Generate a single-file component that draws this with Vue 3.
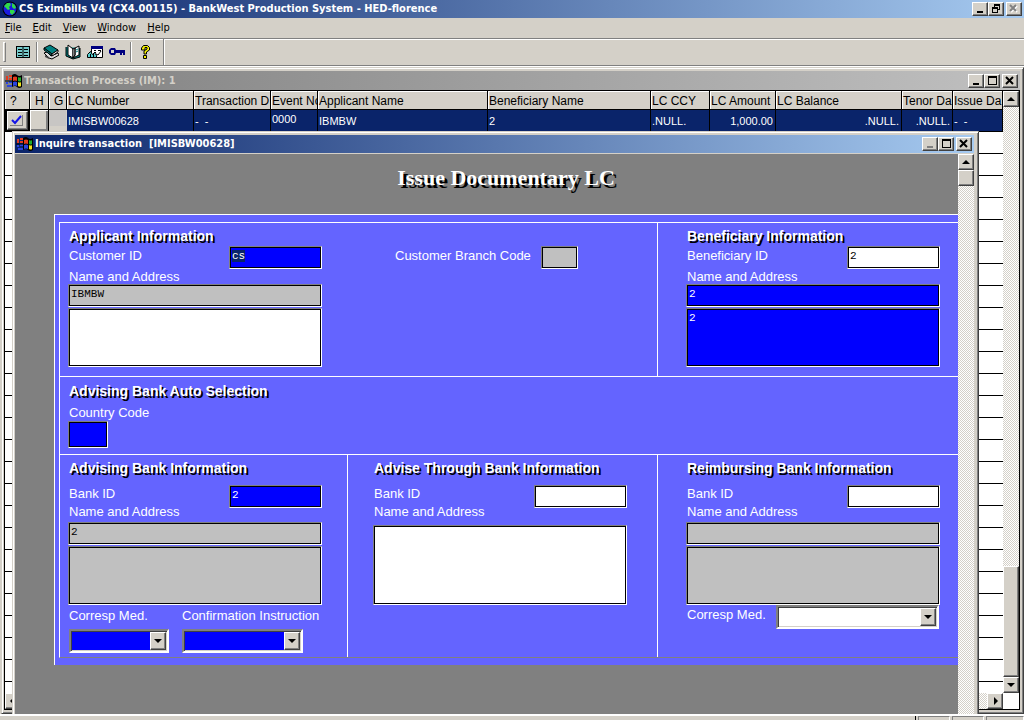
<script setup>
import { onMounted, ref } from 'vue'

const menus = ['File', 'Edit', 'View', 'Window', 'Help']

const columns = [
  { name: '?', width: 25, value: '', kind: 'tick' },
  { name: 'H', width: 19, value: '', kind: 'raised' },
  { name: 'G', width: 18, value: '', kind: 'flat' },
  { name: 'LC Number', width: 127, value: 'IMISBW00628' },
  { name: 'Transaction D', width: 77, value: '-  -' },
  { name: 'Event No', width: 47, value: '0000', kind: 'high' },
  { name: 'Applicant Name', width: 170, value: 'IBMBW' },
  { name: 'Beneficiary Name', width: 163, value: '2' },
  { name: 'LC CCY', width: 59, value: '.NULL.' },
  { name: 'LC Amount', width: 66, value: '1,000.00', kind: 'right' },
  { name: 'LC Balance', width: 126, value: '.NULL.', kind: 'right' },
  { name: 'Tenor Da', width: 51, value: '.NULL.', kind: 'right' },
  { name: 'Issue Da', width: 50, value: '-  -' },
]

const customerId = ref('cs')
const customerInput = ref(null)
const selected = ref(true)

onMounted(() => {
  customerInput.value.focus()
  customerInput.value.select()
})
</script>

<template>
  <div class="app">
    <header class="titlebar main-title">
      <svg class="globe" viewBox="0 0 16 16" aria-hidden="true">
        <circle cx="8" cy="8" r="7.5" fill="#000" />
        <circle cx="8" cy="8" r="6.5" fill="#1a1ae0" />
        <path d="M2 5l3-3 3 0 1 2-2 2 1 2-2 1-2-2zM10 2l3 2 1 3-2 1-2-2zM8 9l4 0 1 2-3 3-2-2z" fill="#2fd84a" />
      </svg>
      <h1>CS Eximbills V4 (CX4.00115) - BankWest Production System - HED-florence</h1>
      <div class="winbuttons">
        <button aria-label="Minimize"><svg viewBox="0 0 12 10"><path d="M3 7h6v2H3z" /></svg></button>
        <button aria-label="Restore"><svg viewBox="0 0 12 10"><path d="M4 0h6v6H8v3H2V3h2zM5 2v1h3v2h1V2zM3 5v3h4V5z" fill-rule="evenodd" /></svg></button>
        <button aria-label="Close" class="close off"><svg viewBox="0 0 12 10"><path d="M3 2l6 6M9 2l-6 6" class="light" /><path d="M2 1l6 6M8 1l-6 6" class="x" /></svg></button>
      </div>
    </header>

    <nav class="menubar">
      <button v-for="m in menus" :key="m"><u>{{ m[0] }}</u>{{ m.slice(1) }}</button>
    </nav>

    <div class="toolrow">
      <div class="toolbar">
        <span class="grip"></span>
        <button aria-label="List">
          <svg viewBox="0 0 16 16"><path d="M1 2h14v12H1z" fill="#000" /><path d="M2 3h12v10H2z" fill="#7cc" /><path d="M3 5.500h4M9 5.500h4M3 8.500h4M9 8.500h4M3 11.500h4M9 11.500h4" stroke="#000" /><path d="M8 3v10" stroke="#000" /></svg>
        </button>
        <span class="sep"></span>
        <button aria-label="Catalogue">
          <svg viewBox="0 0 16 16"><path d="M1 9l3-1 4 4 7-3 1 2-7 4-3-1z" fill="#ddd" stroke="#000" /><path d="M1 4l6-3 8 5-6 4z" fill="#008080" stroke="#000" /><path d="M1 4v2l8 6v-2z" fill="#008080" stroke="#000" /><path d="M9 10v2l6-4V6z" fill="#fff" stroke="#000" /><path d="M2 11v2l4 2v-2z" fill="#444" /></svg>
        </button>
        <button aria-label="Open">
          <svg viewBox="0 0 16 16"><path d="M1 3v9l7 3 7-2V4" fill="#008080" stroke="#000" /><path d="M3 1l5 4v9l-5-3z" fill="#fff" stroke="#000" /><path d="M8 5l2-1v7l-2 3zM10 4l4-2v9l-6 3 2-3z" fill="#fff" stroke="#000" /><path d="M11 6l2-1M11 8l2-1" stroke="#008080" /></svg>
        </button>
        <button aria-label="Report">
          <svg viewBox="0 0 16 16"><path d="M4.500 2.500h11v11h-11z" fill="#fff" stroke="#000" /><path d="M4 2h12v3H4z" fill="#000080" /><path d="M7 6.500h2M11 6.500h3M7 8.500h2" stroke="#000" /><path d="M9 10l2 1 3-4" fill="none" stroke="#000" /><path d="M0.500 13.500v-3l3-3 2 3 2-2 2 3v2z" fill="#5cc" stroke="#000" /><path d="M3.500 10v3M6.500 10v3" stroke="#000" /></svg>
        </button>
        <button aria-label="Key">
          <svg viewBox="0 0 16 16"><path d="M2 4h4l1 2h9v5h-2V9h-1v2h-2V9H7l-1 2H2l-2-2V6z" fill="#000080" /><path d="M2 6h3v3H2z" fill="#d4d0c8" /></svg>
        </button>
        <span class="sep"></span>
        <button aria-label="Help">
          <svg viewBox="0 0 16 16"><path d="M4.500 6V4l2-2.500h4l2 2v2.500l-3 2v2h-2.500v-3l3-2v-1.500h-2V6zM6.500 11.500h3v3h-3z" fill="#f4f000" stroke="#000" /></svg>
        </button>
      </div>
    </div>

    <main class="mdi">
      <section class="window docs">
        <header class="titlebar idle">
          <svg class="flag" viewBox="0 0 18 16" aria-hidden="true">
            <path d="M7 2q3-2 5 0t5 0v12q-3 2-5 0t-5 0z" fill="#000" />
            <path d="M8 4q2-1 4 0v4q-2-1-4 0z" fill="#e33b1e" /><path d="M13 4q2 1 3 0v4q-1 1-3 0z" fill="#1fae2c" />
            <path d="M8 9q2-1 4 0v4q-2-1-4 0z" fill="#2a44e0" /><path d="M13 9q2 1 3 0v4q-1 1-3 0z" fill="#f2e21b" />
            <path d="M1 4h2M4 3h3M1 6h2M4 6h3" stroke="#e33b1e" stroke-width="2" /><path d="M1 10h2M4 9h3M2 13h5" stroke="#2a44e0" stroke-width="2" /><path d="M0 8h7" stroke="#000" />
          </svg>
          <h2>Transaction Process (IM): 1</h2>
          <div class="winbuttons">
            <button aria-label="Minimize"><svg viewBox="0 0 12 10"><path d="M3 7h6v2H3z" /></svg></button>
            <button aria-label="Maximize"><svg viewBox="0 0 12 10"><path d="M2 0h9v9H2zM3 2v6h7V2z" fill-rule="evenodd" /></svg></button>
            <button aria-label="Close" class="close"><svg viewBox="0 0 12 10"><path d="M2 1l7 7M9 1l-7 7" class="x" /></svg></button>
          </div>
        </header>
        <div class="gridbox">
          <div class="gridmain">
            <div class="gridview">
              <table>
                <colgroup>
                  <col v-for="c in columns" :key="c.name" :style="{ width: c.width + 'px' }" />
                </colgroup>
                <thead>
                  <tr><th v-for="c in columns" :key="c.name" scope="col">{{ c.name }}</th></tr>
                </thead>
                <tbody>
                  <tr class="current">
                    <td v-for="c in columns" :key="c.name" :class="c.kind">
                      <label v-if="c.kind === 'tick'" class="tick">
                        <input v-model="selected" type="checkbox" aria-label="Select transaction" />
                        <svg v-if="selected" viewBox="0 0 12 10"><path d="M2 5l3 3 6-7" /></svg>
                      </label>
                      <template v-else>{{ c.value }}</template>
                    </td>
                  </tr>
                  <tr v-for="n in 27" :key="n"><td :colspan="columns.length"></td></tr>
                </tbody>
              </table>
            </div>
            <div class="hscroll">
              <button aria-label="Scroll left"><svg viewBox="0 0 8 8"><path d="M5 0v8L1 4z" /></svg></button>
              <button aria-label="Scroll right"><svg viewBox="0 0 8 8"><path d="M3 0v8l4-4z" /></svg></button>
            </div>
          </div>
          <div class="gridside">
            <div class="vscroll">
              <button aria-label="Scroll up"><svg viewBox="0 0 8 8"><path d="M0 6h8L4 2z" /></svg></button>
              <span class="space"></span>
              <span class="thumb long"></span>
              <button aria-label="Scroll down"><svg viewBox="0 0 8 8"><path d="M0 2h8L4 6z" /></svg></button>
            </div>
            <div class="corner"></div>
          </div>
        </div>
      </section>

      <section class="window inquire">
        <header class="titlebar">
          <svg class="flag" viewBox="0 0 18 16" aria-hidden="true">
            <path d="M7 2q3-2 5 0t5 0v12q-3 2-5 0t-5 0z" fill="#000" />
            <path d="M8 4q2-1 4 0v4q-2-1-4 0z" fill="#e33b1e" /><path d="M13 4q2 1 3 0v4q-1 1-3 0z" fill="#1fae2c" />
            <path d="M8 9q2-1 4 0v4q-2-1-4 0z" fill="#2a44e0" /><path d="M13 9q2 1 3 0v4q-1 1-3 0z" fill="#f2e21b" />
            <path d="M1 4h2M4 3h3M1 6h2M4 6h3" stroke="#e33b1e" stroke-width="2" /><path d="M1 10h2M4 9h3M2 13h5" stroke="#2a44e0" stroke-width="2" /><path d="M0 8h7" stroke="#000" />
          </svg>
          <h2>Inquire transaction&nbsp; [IMISBW00628]</h2>
          <div class="winbuttons">
            <button aria-label="Minimize" class="dim"><svg viewBox="0 0 12 10"><path d="M3 7h6v2H3z" /></svg></button>
            <button aria-label="Maximize"><svg viewBox="0 0 12 10"><path d="M2 0h9v9H2zM3 2v6h7V2z" fill-rule="evenodd" /></svg></button>
            <button aria-label="Close" class="close"><svg viewBox="0 0 12 10"><path d="M2 1l7 7M9 1l-7 7" class="x" /></svg></button>
          </div>
        </header>
        <div class="client">
          <div class="canvas">
            <h3 class="form-title">Issue Documentary LC</h3>
            <form class="panel" @submit.prevent>
              <div class="cells">
                <fieldset class="cell applicant">
                  <legend>Applicant Information</legend>
                  <div class="line">
                    <label for="cust">Customer ID</label>
                    <input id="cust" ref="customerInput" v-model="customerId" class="box blue code" spellcheck="false" />
                    <label for="branch" class="branch">Customer Branch Code</label>
                    <input id="branch" class="box grey short" />
                  </div>
                  <label for="appname">Name and Address</label>
                  <input id="appname" class="box grey wide" value="IBMBW" />
                  <textarea class="box wide area" aria-label="Applicant address"></textarea>
                </fieldset>

                <fieldset class="cell beneficiary third">
                  <legend>Beneficiary Information</legend>
                  <div class="line">
                    <label for="ben">Beneficiary ID</label>
                    <input id="ben" class="box code" value="2" />
                  </div>
                  <label for="benname">Name and Address</label>
                  <input id="benname" class="box blue wide" value="2" />
                  <textarea class="box blue wide area" aria-label="Beneficiary address">2</textarea>
                </fieldset>

                <fieldset class="cell auto">
                  <legend>Advising Bank Auto Selection</legend>
                  <label for="country">Country Code</label>
                  <input id="country" class="box blue country" />
                </fieldset>

                <fieldset class="cell bank">
                  <legend>Advising Bank Information</legend>
                  <div class="pair">
                    <label for="adv">Bank ID</label>
                    <input id="adv" class="box blue code" value="2" />
                    <label for="advname">Name and Address</label>
                  </div>
                  <input id="advname" class="box grey wide" value="2" />
                  <textarea class="box grey wide area" aria-label="Advising bank address"></textarea>
                  <div class="choices">
                    <label for="med">Corresp Med.</label>
                    <label for="conf">Confirmation Instruction</label>
                    <span class="combo blue"><select id="med"><option></option></select><i><svg viewBox="0 0 8 8"><path d="M0 2h8L4 6z" /></svg></i></span>
                    <span class="combo blue"><select id="conf"><option></option></select><i><svg viewBox="0 0 8 8"><path d="M0 2h8L4 6z" /></svg></i></span>
                  </div>
                </fieldset>

                <fieldset class="cell bank second">
                  <legend>Advise Through Bank Information</legend>
                  <div class="pair">
                    <label for="thru">Bank ID</label>
                    <input id="thru" class="box code" />
                    <label for="thruname">Name and Address</label>
                  </div>
                  <textarea id="thruname" class="box wide tall"></textarea>
                </fieldset>

                <fieldset class="cell bank third">
                  <legend>Reimbursing Bank Information</legend>
                  <div class="pair">
                    <label for="reim">Bank ID</label>
                    <input id="reim" class="box code" />
                    <label for="reimname">Name and Address</label>
                  </div>
                  <input id="reimname" class="box grey wide" />
                  <textarea class="box grey wide area" aria-label="Reimbursing bank address"></textarea>
                  <div class="inline-choice">
                    <label for="rmed">Corresp Med.</label>
                    <span class="combo"><select id="rmed"><option></option></select><i><svg viewBox="0 0 8 8"><path d="M0 2h8L4 6z" /></svg></i></span>
                  </div>
                </fieldset>
              </div>
            </form>
          </div>
          <div class="vscroll">
            <button aria-label="Scroll up"><svg viewBox="0 0 8 8"><path d="M0 6h8L4 2z" /></svg></button>
            <span class="thumb"></span>
          </div>
        </div>
      </section>
    </main>

    <footer class="status">
      <span></span><span></span><span></span>
    </footer>
  </div>
</template>

<style>
body {
  background: #d4d0c8;
}
</style>

<style scoped>
* {
  box-sizing: border-box;
}
.app {
  display: flex;
  flex-direction: column;
  height: 100vh;
  overflow: hidden;
  background: #d4d0c8;
  color: #000;
  font: 12px/14px "Liberation Sans", Arial, sans-serif;
}
button {
  margin: 0;
  padding: 0;
  border: 0;
  background: #d4d0c8;
  color: inherit;
  font: inherit;
}
h1, h2, h3 {
  margin: 0;
}

/* Title bars */
.titlebar {
  display: flex;
  flex: none;
  align-items: center;
  height: 18px;
  padding: 0 2px 0 1px;
  background: linear-gradient(90deg, #0a246a, #a6caf0);
  color: #fff;
}
.titlebar.idle {
  height: 19px;
  background: linear-gradient(90deg, #808080, #c0c0c0);
  color: #d4d0c8;
}
.main-title {
  padding: 0 2px;
}
.titlebar h1, .titlebar h2 {
  flex: 1;
  overflow: hidden;
  font: bold 11px/16px "DejaVu Sans Condensed", "DejaVu Sans", sans-serif;
  white-space: nowrap;
}
.globe {
  width: 16px;
  height: 16px;
  margin-right: 1px;
}
.flag {
  width: 18px;
  height: 16px;
  margin-right: 1px;
}
.winbuttons {
  display: flex;
}
.winbuttons button {
  display: flex;
  align-items: center;
  justify-content: center;
  width: 16px;
  height: 14px;
}
.winbuttons button, .vscroll button, .hscroll button, .thumb, .combo i {
  border: 1px solid;
  border-color: #fff #404040 #404040 #fff;
  box-shadow: inset -1px -1px #808080;
  background: #d4d0c8;
}
.winbuttons .close {
  margin-left: 2px;
}
.winbuttons svg {
  width: 12px;
  height: 10px;
}
.winbuttons .x, .winbuttons .light {
  fill: none;
  stroke: #000;
  stroke-width: 2;
}
.winbuttons .off .x {
  stroke: #808080;
}
.winbuttons .off .light {
  stroke: #fff;
}
.dim path {
  fill: #808080;
}

/* Menu and tools */
.menubar {
  display: flex;
  flex: none;
  height: 20px;
  padding-left: 5px;
  gap: 11px;
}
.menubar button {
  font: 11px/20px "DejaVu Sans Condensed", "DejaVu Sans", sans-serif;
}
.toolrow {
  display: flex;
  flex: none;
  height: 28px;
  margin-bottom: 1px;
  border-top: 1px solid #808080;
  border-bottom: 1px solid #808080;
  box-shadow: inset 0 1px #fff, 0 1px #fff;
}
.toolbar {
  display: flex;
  align-items: center;
  width: 165px;
  padding-left: 3px;
  border-right: 1px solid #fff;
  box-shadow: inset -1px 0 #808080;
}
.toolbar button {
  width: 22px;
  height: 22px;
  background: none;
}
.toolbar svg {
  display: block;
  width: 16px;
  height: 16px;
  margin: auto;
}
.grip {
  width: 3px;
  height: 20px;
  margin-right: 6px;
  border: 1px solid;
  border-color: #fff #808080 #808080 #fff;
}
.sep {
  width: 2px;
  height: 20px;
  margin: 0 2px;
  border-left: 1px solid #808080;
  border-right: 1px solid #fff;
}

/* Windows */
.mdi {
  position: relative;
  display: flex;
  flex: 1;
  min-height: 0;
  padding-left: 1px;
  overflow: hidden;
}
.window {
  display: flex;
  flex-direction: column;
  padding: 3px 3px 3px 2px;
  border: 1px solid;
  border-color: #d4d0c8 #404040 #404040 #d4d0c8;
  box-shadow: inset 1px 1px #fff, inset -1px -1px #808080;
  background: #d4d0c8;
}
.docs {
  flex: 1;
  min-width: 0;
}
.inquire {
  position: absolute;
  top: 64px;
  right: 45px;
  bottom: -4px;
  left: 12px;
  padding-right: 4px;
}

/* Transaction grid */
.gridbox {
  display: flex;
  flex: 1;
  min-height: 0;
  border: 1px solid #000;
  background: #fff;
}
.gridmain {
  display: flex;
  flex: 1;
  flex-direction: column;
  min-width: 0;
}
.gridview {
  flex: 1;
  min-height: 0;
  overflow: hidden;
}
table {
  width: 100%;
  table-layout: fixed;
  border-spacing: 0;
}
th {
  height: 19px;
  padding: 1px 0 0 1px;
  overflow: hidden;
  border-right: 1px solid #000;
  border-bottom: 1px solid #000;
  box-shadow: inset 1px 1px #fff;
  background: #d4d0c8;
  font: 12px/16px "Liberation Sans", Arial, sans-serif;
  text-align: left;
  white-space: nowrap;
}
th:nth-child(-n+3) {
  padding-left: 5px;
}
td {
  height: 22px;
  padding: 0;
  border-bottom: 1px solid #000;
  white-space: nowrap;
}
.current td {
  padding: 0 2px 0 1px;
  border-right: 1px solid #000;
  background: #0a246a;
  color: #fff;
  font-size: 11px;
  white-space: pre;
}
.current td.right {
  text-align: right;
}
.current td.high {
  padding-bottom: 3px;
}
.current td.tick {
  padding: 0 1px;
  background: #000;
}
.current td.raised {
  background: #d4d0c8;
  box-shadow: inset 1px 1px #fff, inset -2px -2px #808080;
}
.current td.flat {
  border-right-color: #d4d0c8;
  background: #c8c6c4;
  box-shadow: inset 0 -5px #d4d0c8;
}
label.tick {
  position: relative;
  display: block;
}
.tick input {
  display: block;
  width: 100%;
  height: 19px;
  margin: 0;
  appearance: none;
  border: 1px solid;
  border-color: #fff #404040 #404040 #fff;
  box-shadow: inset -1px -1px #808080;
  background: #d4d0c8;
}
.tick svg {
  position: absolute;
  top: 4px;
  left: 4px;
  width: 13px;
  height: 11px;
  border-right: 1px solid #808080;
  border-bottom: 1px solid #808080;
}
.tick path {
  fill: none;
  stroke: #1414e6;
  stroke-width: 2;
}

/* Scroll bars */
.vscroll, .hscroll {
  display: flex;
  background: repeating-conic-gradient(#fff 0 25%, #d4d0c8 0 50%) 0 0 / 2px 2px;
}
.vscroll {
  flex: none;
  flex-direction: column;
  width: 16px;
}
.hscroll {
  flex: none;
  justify-content: space-between;
  height: 16px;
}
.vscroll button, .hscroll button {
  display: flex;
  flex: none;
  align-items: center;
  justify-content: center;
  width: 16px;
  height: 16px;
}
.vscroll svg, .hscroll svg, .combo svg {
  width: 8px;
  height: 8px;
}
.gridside {
  display: flex;
  flex-direction: column;
}
.gridside .vscroll {
  flex: 1;
}
.corner {
  height: 16px;
  background: #fff;
}
.space {
  flex: 461;
}
.thumb {
  height: 16px;
}
.thumb.long {
  flex: 110;
}

/* Form */
.client {
  display: flex;
  flex: 1;
  min-height: 0;
  margin-top: 1px;
}
.canvas {
  flex: 1;
  min-width: 0;
  padding-left: 39px;
  overflow: hidden;
  background: #808080;
}
.form-title {
  height: 60px;
  padding-top: 11px;
  color: #fff;
  font: bold 22px/26px "Liberation Serif", "Times New Roman", serif;
  text-align: center;
  text-shadow: 3px 3px #000;
}
.panel {
  padding: 7px 0 7px 4px;
  border: solid #fff;
  border-width: 1px 0 0 1px;
  background: #6464ff;
}
.cells {
  display: grid;
  grid-template-columns: 287fr 310fr 301fr;
  border: 1px solid #fff;
  border-right: 0;
  border-bottom-color: #808080;
}
.cell {
  display: flex;
  flex-direction: column;
  align-items: flex-start;
  min-width: 0;
  margin: 0;
  padding: 5px 0 0 8px;
  border: 0;
  color: #fff;
}
.applicant {
  grid-column: 1 / 3;
}
.applicant, .beneficiary {
  padding-bottom: 9px;
  border-bottom: 1px solid #fff;
}
.auto {
  grid-column: 1 / 4;
  padding-top: 6px;
  padding-bottom: 6px;
  border-bottom: 1px solid #fff;
}
.cell.second {
  padding-left: 25px;
  border-left: 1px solid #fff;
}
.cell.third {
  padding-left: 28px;
  border-left: 1px solid #fff;
}
legend {
  float: left;
  height: 18px;
  padding: 0 0 0 1px;
  font: bold 14px/16px "Liberation Sans", Arial, sans-serif;
  text-shadow: 2px 2px #000;
}
label {
  padding-left: 1px;
  font-size: 13px;
  line-height: 15px;
  white-space: nowrap;
}
.line {
  display: flex;
  align-items: flex-start;
}
.line label {
  width: 161px;
  padding-top: 2px;
}
.line .branch {
  width: 147px;
  margin-left: 72px;
}
.box {
  height: 23px;
  margin: 0;
  padding: 0 2px 3px;
  border: 1px solid;
  border-color: #808080 #fff #fff #808080;
  border-radius: 0;
  outline: 0;
  box-shadow: inset 0 0 0 1px #000;
  background: #fff;
  color: #000;
  font: 11px/14px "Liberation Mono", "Courier New", monospace;
  resize: none;
}
.box::selection {
  background: #0a246a;
  color: #fff;
}
.box.blue {
  background: #00f;
  color: #fff;
}
.box.grey {
  background: #c0c0c0;
}
.box.code {
  width: 93px;
}
.box.short {
  width: 37px;
}
.box.wide {
  width: 254px;
}
.box.area {
  height: 59px;
  margin-top: 1px;
  padding-top: 2px;
}
.box.tall {
  height: 80px;
  margin-top: 3px;
}
.box.country {
  width: 40px;
  height: 27px;
  margin-top: 1px;
}
.auto label {
  margin-top: 4px;
}
.bank legend {
  height: 25px;
}
.pair {
  display: grid;
  grid-template-columns: 161px 93px;
  grid-template-rows: 18px 18px;
  margin-bottom: 1px;
}
.pair label {
  line-height: 18px;
}
.pair .box {
  grid-row: 1 / 3;
  grid-column: 2;
}
.choices {
  display: grid;
  grid-template-columns: 100px 121px;
  gap: 5px 13px;
  margin: 2px 0 4px 1px;
}
.choices label {
  padding: 0;
  line-height: 17px;
}
.combo {
  position: relative;
  display: flex;
  height: 24px;
  border: 2px solid;
  border-color: #808080 #fff #fff #808080;
  box-shadow: inset 1px 1px #404040, inset -1px -1px #d4d0c8;
  background: #fff;
}
.combo select {
  width: 100%;
  margin: 1px;
  padding: 0;
  appearance: none;
  border: 0;
  border-radius: 0;
  outline: 0;
  background: #fff;
}
.combo.blue select {
  background: #00f;
}
.combo i {
  position: absolute;
  top: 1px;
  right: 1px;
  bottom: 1px;
  display: flex;
  align-items: center;
  justify-content: center;
  width: 16px;
  pointer-events: none;
}
.inline-choice {
  display: flex;
  align-items: flex-start;
}
.inline-choice label {
  width: 90px;
  padding-top: 2px;
}
.inline-choice .combo {
  width: 163px;
}

/* Status bar */
.status {
  display: flex;
  flex: none;
  justify-content: flex-end;
  height: 6px;
  gap: 2px;
  padding-top: 2px;
  box-shadow: inset 0 2px #fff;
}
.status::before {
  width: 1px;
  background: #000;
  content: "";
}
.status span {
  width: 32px;
  border: 1px solid;
  border-color: #808080 #fff #fff #808080;
  border-bottom: 0;
}
.status span:last-child {
  width: 38px;
}
</style>
